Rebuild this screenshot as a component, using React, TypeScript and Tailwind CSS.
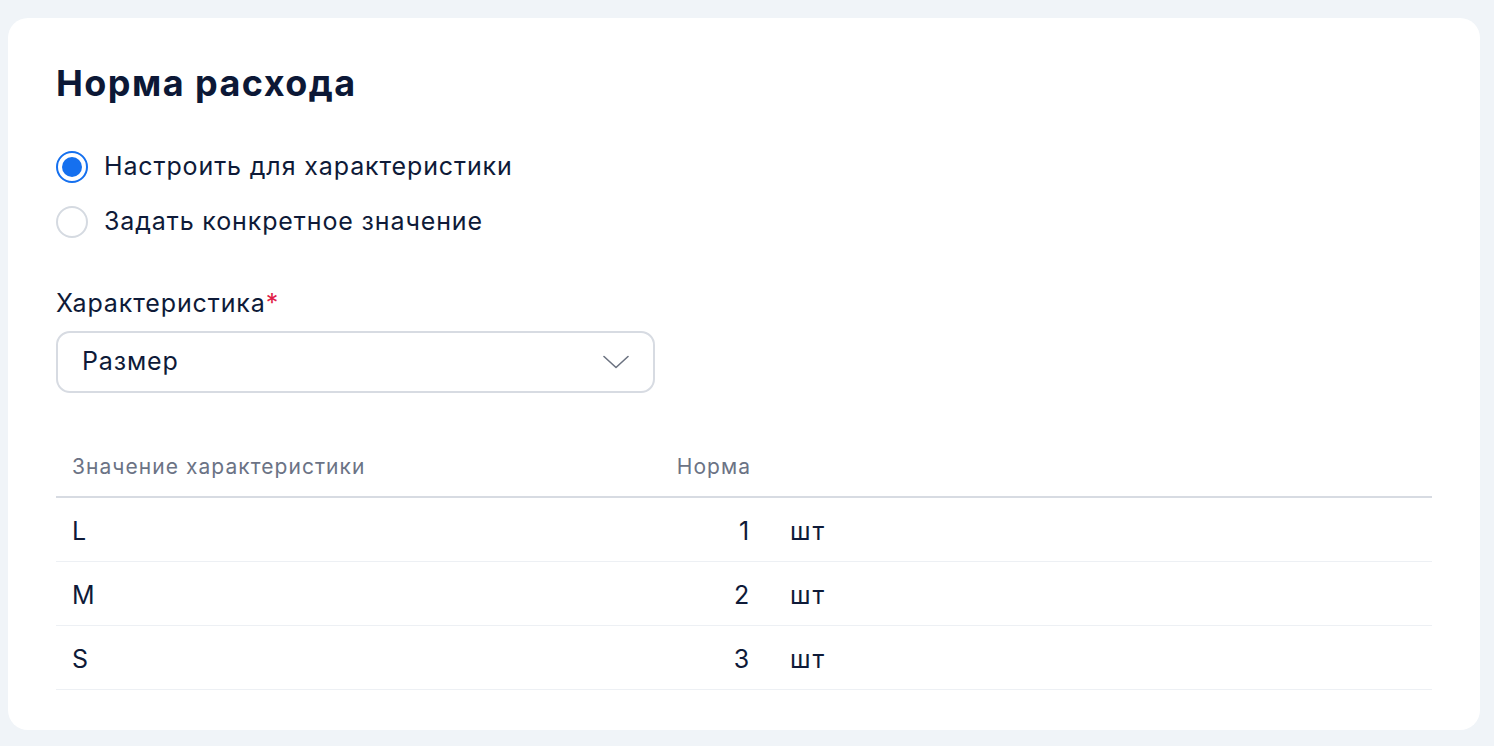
import { useState } from 'react';

const rows = [
  { value: 'L', norm: 1, unit: 'шт' },
  { value: 'M', norm: 2, unit: 'шт' },
  { value: 'S', norm: 3, unit: 'шт' },
];

function Radio({ checked, label, onClick }: { checked: boolean; label: string; onClick: () => void }) {
  return (
    <button type="button" onClick={onClick} className="flex items-center h-10 gap-4 text-left">
      {checked ? (
        <span className="w-8 h-8 rounded-full border-2 border-[#1570ef] flex items-center justify-center">
          <span className="w-[20px] h-[20px] rounded-full bg-[#1570ef]" />
        </span>
      ) : (
        <span className="w-8 h-8 rounded-full border-2 border-[#d5dae1]" />
      )}
      <span className="text-[25px] tracking-[0.035em] text-[#0e1a38]">{label}</span>
    </button>
  );
}

export default function App() {
  const [mode, setMode] = useState<'char' | 'fixed'>('char');

  return (
    <div className="min-h-screen bg-[#f0f4f8] pt-[18px] pl-2 pr-[14px] pb-4" style={{ fontFamily: 'Inter, "Noto Sans", sans-serif' }}>
      <div className="bg-white rounded-[20px] pt-[45px] px-12 pb-10">
        <h1 className="text-[36px] leading-10 font-bold tracking-[0.04em] text-[#0c1836]">Норма расхода</h1>

        {/* Mode switch */}
        <div className="mt-11 flex flex-col gap-[15px]">
          <Radio checked={mode === 'char'} label="Настроить для характеристики" onClick={() => setMode('char')} />
          <Radio checked={mode === 'fixed'} label="Задать конкретное значение" onClick={() => setMode('fixed')} />
        </div>

        {/* Characteristic select */}
        <div className="mt-[45px]">
          <div className="text-[25px] leading-8 tracking-[0.035em] text-[#0e1a38]">
            Характеристика<span className="text-[#e11d48]">*</span>
          </div>
          <div className="mt-3 w-[599px] h-[62px] rounded-[14px] border-2 border-[#d7dbe2] flex items-center justify-between pl-6 pr-6">
            <span className="text-[25px] tracking-[0.035em] text-[#0e1a38]">Размер</span>
            <svg width="26" height="14" viewBox="0 0 26 14" fill="none">
              <path d="M1 1.5 13 12.5 25 1.5" stroke="#6b7280" strokeWidth="1.6" strokeLinecap="round" strokeLinejoin="round" />
            </svg>
          </div>
        </div>

        {/* Norms table */}
        <div className="mt-[41px]">
          <div className="flex items-center h-16 pt-1 border-b-2 border-[#d7dbe2] text-[21px] tracking-[0.05em] text-[#6b7385]">
            <div className="w-[600px] pl-4">Значение характеристики</div>
            <div className="w-[95px] text-right">Норма</div>
          </div>
          {rows.map((row) => (
            <div key={row.value} className="flex items-center h-16 pt-1 border-b border-[#edf0f4] text-[25px] tracking-[0.035em] text-[#0e1a38]">
              <div className="w-[600px] pl-4">{row.value}</div>
              <div className="w-[94px] text-right">{row.norm}</div>
              <div className="pl-[40px] tracking-[0.08em]">{row.unit}</div>
            </div>
          ))}
        </div>
      </div>
    </div>
  );
}
